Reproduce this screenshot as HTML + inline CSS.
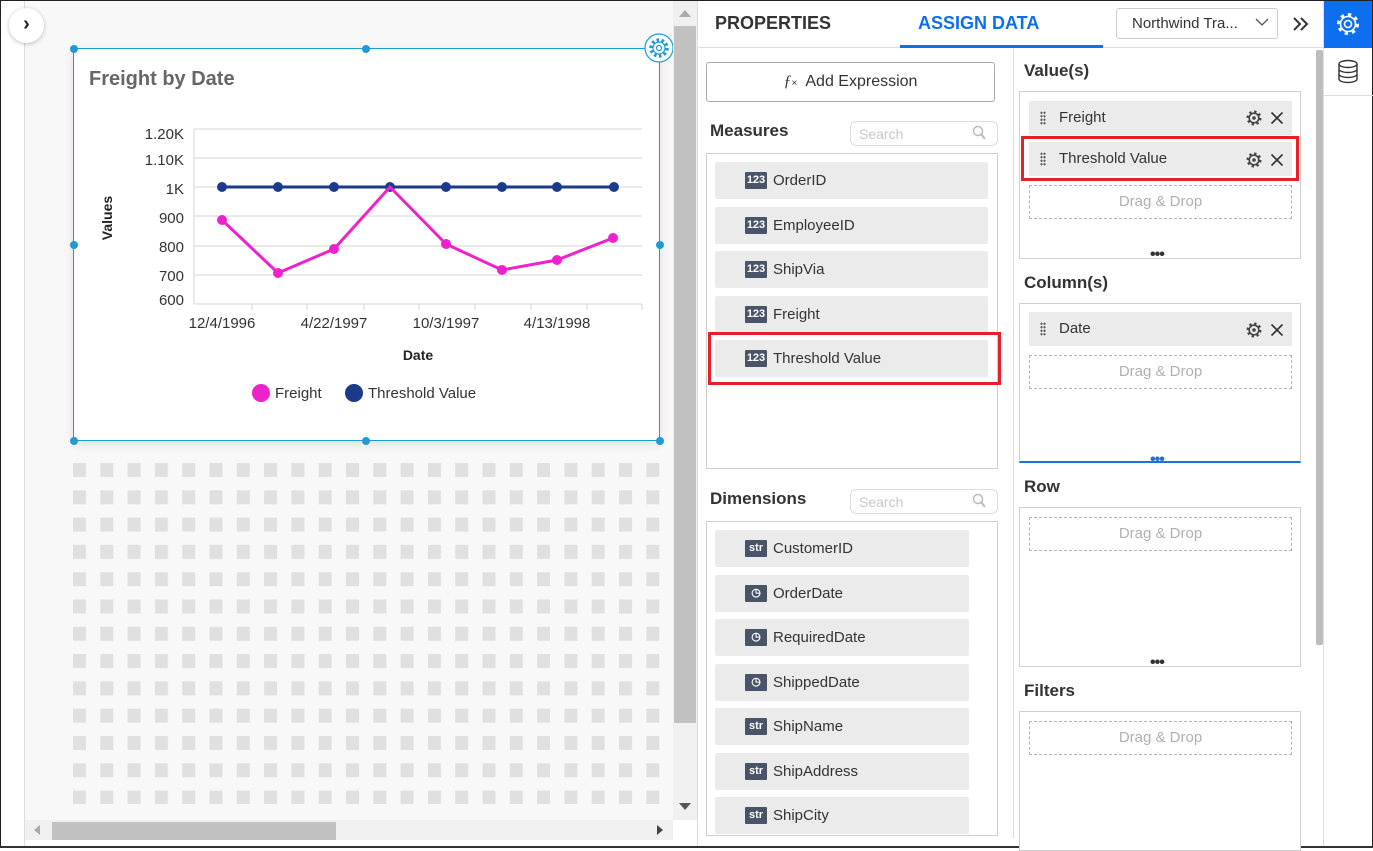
<!DOCTYPE html>
<html><head><meta charset="utf-8"><style>
*{box-sizing:border-box;margin:0;padding:0}
body{width:1373px;height:848px;overflow:hidden;font-family:"Liberation Sans",sans-serif;background:#fff;position:relative;color:#333}
.a{position:absolute}
.item{position:absolute;background:#ebebeb;border-radius:2px;height:37px;font-size:15px;color:#333;line-height:37px;padding-left:58px}
.ic{position:absolute;left:30px;top:10px;width:22px;height:17px;background:#4a5468;color:#fff;font-size:11px;font-weight:bold;line-height:17px;text-align:center;border-radius:1px}
.lbl{position:absolute;font-size:17px;font-weight:bold;color:#333}
.box{position:absolute;border:1px solid #cfcfcf;background:#fff}
.srch{position:absolute;border:1px solid #ddd;border-radius:6px;height:25px;width:148px;font-size:14px;color:#c8c8c8;padding:4px 8px}
.dd{position:absolute;border:1px dashed #b5b5b5;height:34px;width:263px;left:1029px;color:#b0b0b0;font-size:15px;text-align:center;line-height:32px}
.fi{position:absolute;left:1029px;width:263px;height:34px;background:#ebebeb;font-size:15px;line-height:34px;padding-left:30px;color:#333}
.grip{position:absolute;left:11px;top:10px;width:6px;height:14px;background-image:radial-gradient(circle,#555 1px,transparent 1.2px);background-size:3px 3.5px}
.dots{position:absolute;font-size:16px;font-weight:bold;color:#333;letter-spacing:-1px}
</style></head><body>
<div class="a" style="left:0;top:0;width:1373px;height:848px;border:1px solid #222;border-bottom:2px solid #333"></div>
<div class="a" style="left:24px;top:1px;width:1px;height:845px;background:#ddd"></div>
<div class="a" style="left:25px;top:1px;width:648px;height:819px;background:#f8f8f8"></div>
<div class="a" style="left:9px;top:8px;width:35px;height:35px;border-radius:50%;background:#fff;box-shadow:0 1px 4px rgba(0,0,0,.25);text-align:center;line-height:33px;font-size:20px;font-weight:bold;color:#222">›</div>
<svg class="a" style="left:73px;top:456px" width="587" height="348"><defs><pattern id="p" width="27.3" height="27.3" patternUnits="userSpaceOnUse"><rect x="0" y="7" width="13" height="14" fill="#e0e0e0"/></pattern></defs><rect width="587" height="348" fill="url(#p)"/></svg>
<div class="a" style="left:73px;top:48px;width:587px;height:393px;background:#fff;border:1px solid #1e9bd7;box-shadow:0 3px 10px rgba(0,0,0,.1)"></div>
<svg class="a" style="left:0;top:0" width="700" height="460">
<g fill="#1e9bd7"><circle cx="74" cy="49" r="4"/><circle cx="366" cy="49" r="4"/><circle cx="74" cy="245" r="4"/><circle cx="660" cy="245" r="4"/><circle cx="74" cy="441" r="4"/><circle cx="366" cy="441" r="4"/><circle cx="660" cy="441" r="4"/></g>
<circle cx="659" cy="48" r="14" fill="#fff" stroke="#1e9bd7" stroke-width="1.2"/>
<circle cx="659" cy="48" r="8" fill="none" stroke="#1e9bd7" stroke-width="3.5" stroke-dasharray="2.5 2.5"/>
<circle cx="659" cy="48" r="6" fill="#fff" stroke="#1e9bd7" stroke-width="1.2"/>
<circle cx="659" cy="48" r="2.5" fill="none" stroke="#1e9bd7" stroke-width="1.2"/>
<text x="89" y="85" font-size="20" font-weight="bold" fill="#666" font-family="Liberation Sans">Freight by Date</text>
<g stroke="#e3e3e3" stroke-width="1.5"><line x1="194" y1="129" x2="642" y2="129"/><line x1="194" y1="158" x2="642" y2="158"/><line x1="194" y1="187" x2="642" y2="187"/><line x1="194" y1="216" x2="642" y2="216"/><line x1="194" y1="246" x2="642" y2="246"/><line x1="194" y1="275" x2="642" y2="275"/><line x1="194" y1="304" x2="642" y2="304"/><line x1="194" y1="129" x2="194" y2="304"/>
<line x1="252" y1="304" x2="252" y2="310"/><line x1="307" y1="304" x2="307" y2="310"/><line x1="364" y1="304" x2="364" y2="310"/><line x1="419" y1="304" x2="419" y2="310"/><line x1="475" y1="304" x2="475" y2="310"/><line x1="531" y1="304" x2="531" y2="310"/><line x1="587" y1="304" x2="587" y2="310"/><line x1="642" y1="304" x2="642" y2="310"/></g>
<g font-size="15" fill="#333" text-anchor="end" font-family="Liberation Sans"><text x="184" y="139">1.20K</text><text x="184" y="165">1.10K</text><text x="184" y="194">1K</text><text x="184" y="223">900</text><text x="184" y="252">800</text><text x="184" y="281">700</text><text x="184" y="305">600</text></g>
<g font-size="15" fill="#333" text-anchor="middle" font-family="Liberation Sans"><text x="222" y="328">12/4/1996</text><text x="334" y="328">4/22/1997</text><text x="446" y="328">10/3/1997</text><text x="557" y="328">4/13/1998</text></g>
<text x="418" y="360" font-size="14" font-weight="bold" text-anchor="middle" fill="#222" font-family="Liberation Sans">Date</text>
<text transform="translate(112,218) rotate(-90)" font-size="14" font-weight="bold" text-anchor="middle" fill="#222" font-family="Liberation Sans">Values</text>
<polyline points="222,187 614,187" stroke="#1a3a8a" stroke-width="3" fill="none"/>
<g fill="#1a3a8a"><circle cx="222" cy="187" r="5"/><circle cx="278" cy="187" r="5"/><circle cx="334" cy="187" r="5"/><circle cx="390" cy="187" r="5"/><circle cx="446" cy="187" r="5"/><circle cx="502" cy="187" r="5"/><circle cx="557" cy="187" r="5"/><circle cx="614" cy="187" r="5"/></g>
<polyline points="222,220 278,273 334,249 390,187 446,244 502,270 557,260 613,238" stroke="#ee22cc" stroke-width="3" fill="none"/>
<g fill="#ee22cc"><circle cx="222" cy="220" r="5"/><circle cx="278" cy="273" r="5"/><circle cx="334" cy="249" r="5"/><circle cx="446" cy="244" r="5"/><circle cx="502" cy="270" r="5"/><circle cx="557" cy="260" r="5"/><circle cx="613" cy="238" r="5"/></g>
<circle cx="261" cy="393" r="9" fill="#ee22cc"/><text x="275" y="398" font-size="15" fill="#333" font-family="Liberation Sans">Freight</text>
<circle cx="354" cy="393" r="9" fill="#1a3a8a"/><text x="368" y="398" font-size="15" fill="#333" font-family="Liberation Sans">Threshold Value</text>
</svg>
<div class="a" style="left:673px;top:1px;width:24px;height:819px;background:#f0f0f0"></div>
<div class="a" style="left:674px;top:26px;width:22px;height:697px;background:#c1c1c1"></div>
<div class="a" style="left:679px;top:10px;border:6px solid transparent;border-bottom:7px solid #aaa;border-top:0"></div>
<div class="a" style="left:679px;top:803px;border:6px solid transparent;border-top:7px solid #555;border-bottom:0"></div>
<div class="a" style="left:25px;top:820px;width:648px;height:20px;background:#f0f0f0"></div>
<div class="a" style="left:52px;top:822px;width:284px;height:18px;background:#c1c1c1"></div>
<div class="a" style="left:34px;top:825px;border:5px solid transparent;border-right:6px solid #aaa;border-left:0"></div>
<div class="a" style="left:657px;top:825px;border:5px solid transparent;border-left:6px solid #444;border-right:0"></div>
<div class="a" style="left:697px;top:1px;width:1px;height:845px;background:#ddd"></div>
<div class="a" style="left:715px;top:13px;font-size:18px;font-weight:bold;color:#333">PROPERTIES</div>
<div class="a" style="left:918px;top:13px;font-size:18px;font-weight:bold;color:#0d6ef0">ASSIGN DATA</div>
<div class="a" style="left:698px;top:47px;width:625px;height:1px;background:#ddd"></div>
<div class="a" style="left:900px;top:45px;width:203px;height:3px;background:#0d6ef0"></div>
<div class="a" style="left:1116px;top:8px;width:162px;height:31px;border:1px solid #ccc;border-radius:3px;font-size:15px;color:#333;line-height:29px;padding-left:15px">Northwind Tra...</div>
<svg class="a" style="left:1255px;top:17px" width="14" height="10"><polyline points="1,2 7,8 13,2" fill="none" stroke="#555" stroke-width="1.3"/></svg>
<svg class="a" style="left:1292px;top:17px" width="18" height="14"><polyline points="2,1 8,7 2,13" fill="none" stroke="#333" stroke-width="2"/><polyline points="9,1 15,7 9,13" fill="none" stroke="#333" stroke-width="2"/></svg>
<div class="a" style="left:1323px;top:1px;width:1px;height:845px;background:#e0e0e0"></div>
<div class="a" style="left:1324px;top:1px;width:48px;height:47px;background:#0d6ef0"></div>
<svg class="a" style="left:1334px;top:10px" width="28" height="28"><circle cx="14" cy="14" r="9" fill="none" stroke="#fff" stroke-width="4" stroke-dasharray="3.2 3.8"/><circle cx="14" cy="14" r="7.5" fill="#0d6ef0" stroke="#fff" stroke-width="1.6"/><circle cx="14" cy="14" r="3.5" fill="none" stroke="#fff" stroke-width="1.6"/></svg>
<svg class="a" style="left:1336px;top:59px" width="24" height="26"><g fill="none" stroke="#333" stroke-width="1.4"><ellipse cx="12" cy="5" rx="9" ry="3.5"/><path d="M3 5v15c0 2 4 3.5 9 3.5s9-1.5 9-3.5V5M3 10c0 2 4 3.5 9 3.5s9-1.5 9-3.5M3 15c0 2 4 3.5 9 3.5s9-1.5 9-3.5"/></g></svg>
<div class="a" style="left:1324px;top:95px;width:49px;height:1px;background:#ddd"></div>
<div class="a" style="left:706px;top:62px;width:289px;height:40px;border:1px solid #aaa;border-radius:3px;text-align:center;line-height:38px;font-size:16px;color:#333"><i style="font-family:'Liberation Serif'">ƒ</i><span style="font-size:10px">×</span>&nbsp; Add Expression</div>
<div class="lbl" style="left:710px;top:121px">Measures</div>
<div class="srch" style="left:850px;top:121px">Search</div>
<svg class="a" style="left:972px;top:125px" width="14" height="15"><circle cx="6" cy="6" r="4.5" fill="none" stroke="#bbb" stroke-width="1.5"/><line x1="9" y1="9" x2="13" y2="14" stroke="#bbb" stroke-width="2"/></svg>
<div class="box" style="left:706px;top:153px;width:292px;height:316px"></div>
<div class="item" style="left:715px;top:162px;width:273px"><span class="ic">123</span>OrderID</div>
<div class="item" style="left:715px;top:207px;width:273px"><span class="ic">123</span>EmployeeID</div>
<div class="item" style="left:715px;top:251px;width:273px"><span class="ic">123</span>ShipVia</div>
<div class="item" style="left:715px;top:296px;width:273px"><span class="ic">123</span>Freight</div>
<div class="item" style="left:715px;top:340px;width:273px"><span class="ic">123</span>Threshold Value</div>
<div class="a" style="left:708px;top:332px;width:293px;height:53px;border:3px solid #e5202a"></div>
<div class="lbl" style="left:710px;top:489px">Dimensions</div>
<div class="srch" style="left:850px;top:489px">Search</div>
<svg class="a" style="left:972px;top:493px" width="14" height="15"><circle cx="6" cy="6" r="4.5" fill="none" stroke="#bbb" stroke-width="1.5"/><line x1="9" y1="9" x2="13" y2="14" stroke="#bbb" stroke-width="2"/></svg>
<div class="box" style="left:706px;top:521px;width:292px;height:315px"></div>
<div class="item" style="left:715px;top:530px;width:254px"><span class="ic">str</span>CustomerID</div>
<div class="item" style="left:715px;top:575px;width:254px"><span class="ic">◷</span>OrderDate</div>
<div class="item" style="left:715px;top:619px;width:254px"><span class="ic">◷</span>RequiredDate</div>
<div class="item" style="left:715px;top:664px;width:254px"><span class="ic">◷</span>ShippedDate</div>
<div class="item" style="left:715px;top:708px;width:254px"><span class="ic">str</span>ShipName</div>
<div class="item" style="left:715px;top:753px;width:254px"><span class="ic">str</span>ShipAddress</div>
<div class="item" style="left:715px;top:797px;width:254px"><span class="ic">str</span>ShipCity</div>
<div class="a" style="left:1013px;top:48px;width:1px;height:790px;background:#ddd"></div>
<div class="lbl" style="left:1024px;top:61px">Value(s)</div>
<div class="box" style="left:1019px;top:91px;width:282px;height:168px"></div>
<div class="fi" style="top:101px"><span class="grip"></span>Freight</div>
<div class="fi" style="top:142px"><span class="grip"></span>Threshold Value</div>
<div class="a" style="left:1021px;top:136px;width:278px;height:45px;border:3px solid #e5202a"></div>
<div class="dd" style="top:185px">Drag &amp; Drop</div>
<div class="dots" style="left:1150px;top:246px">•••</div>
<div class="lbl" style="left:1024px;top:273px">Column(s)</div>
<div class="box" style="left:1019px;top:303px;width:282px;height:160px;border-bottom:2px solid #1a73d8"></div>
<div class="fi" style="top:312px"><span class="grip"></span>Date</div>
<div class="dd" style="top:355px">Drag &amp; Drop</div>
<div class="dots" style="left:1150px;top:451px;color:#1a73d8">•••</div>
<div class="lbl" style="left:1024px;top:477px">Row</div>
<div class="box" style="left:1019px;top:507px;width:282px;height:160px"></div>
<div class="dd" style="top:517px">Drag &amp; Drop</div>
<div class="dots" style="left:1150px;top:654px">•••</div>
<div class="lbl" style="left:1024px;top:681px">Filters</div>
<div class="box" style="left:1019px;top:711px;width:282px;height:140px"></div>
<div class="dd" style="top:721px">Drag &amp; Drop</div>
<svg class="a" style="left:0;top:0" width="1373" height="848">
<defs><g id="g"><circle r="6" fill="none" stroke="#444" stroke-width="3" stroke-dasharray="2.2 2.5"/><circle r="4.8" fill="none" stroke="#444" stroke-width="1.6"/><circle r="1.8" fill="#444"/></g>
<g id="x"><path d="M-5.5 -5.5L5.5 5.5M5.5 -5.5L-5.5 5.5" stroke="#333" stroke-width="1.6"/></g></defs>
<use href="#g" x="1254" y="118"/><use href="#x" x="1277" y="118"/>
<use href="#g" x="1254" y="160"/><use href="#x" x="1277" y="160"/>
<use href="#g" x="1254" y="330"/><use href="#x" x="1277" y="330"/>
</svg>
<div class="a" style="left:1316px;top:50px;width:7px;height:595px;background:#bdbdbd;border-radius:2px"></div>
</body></html>
